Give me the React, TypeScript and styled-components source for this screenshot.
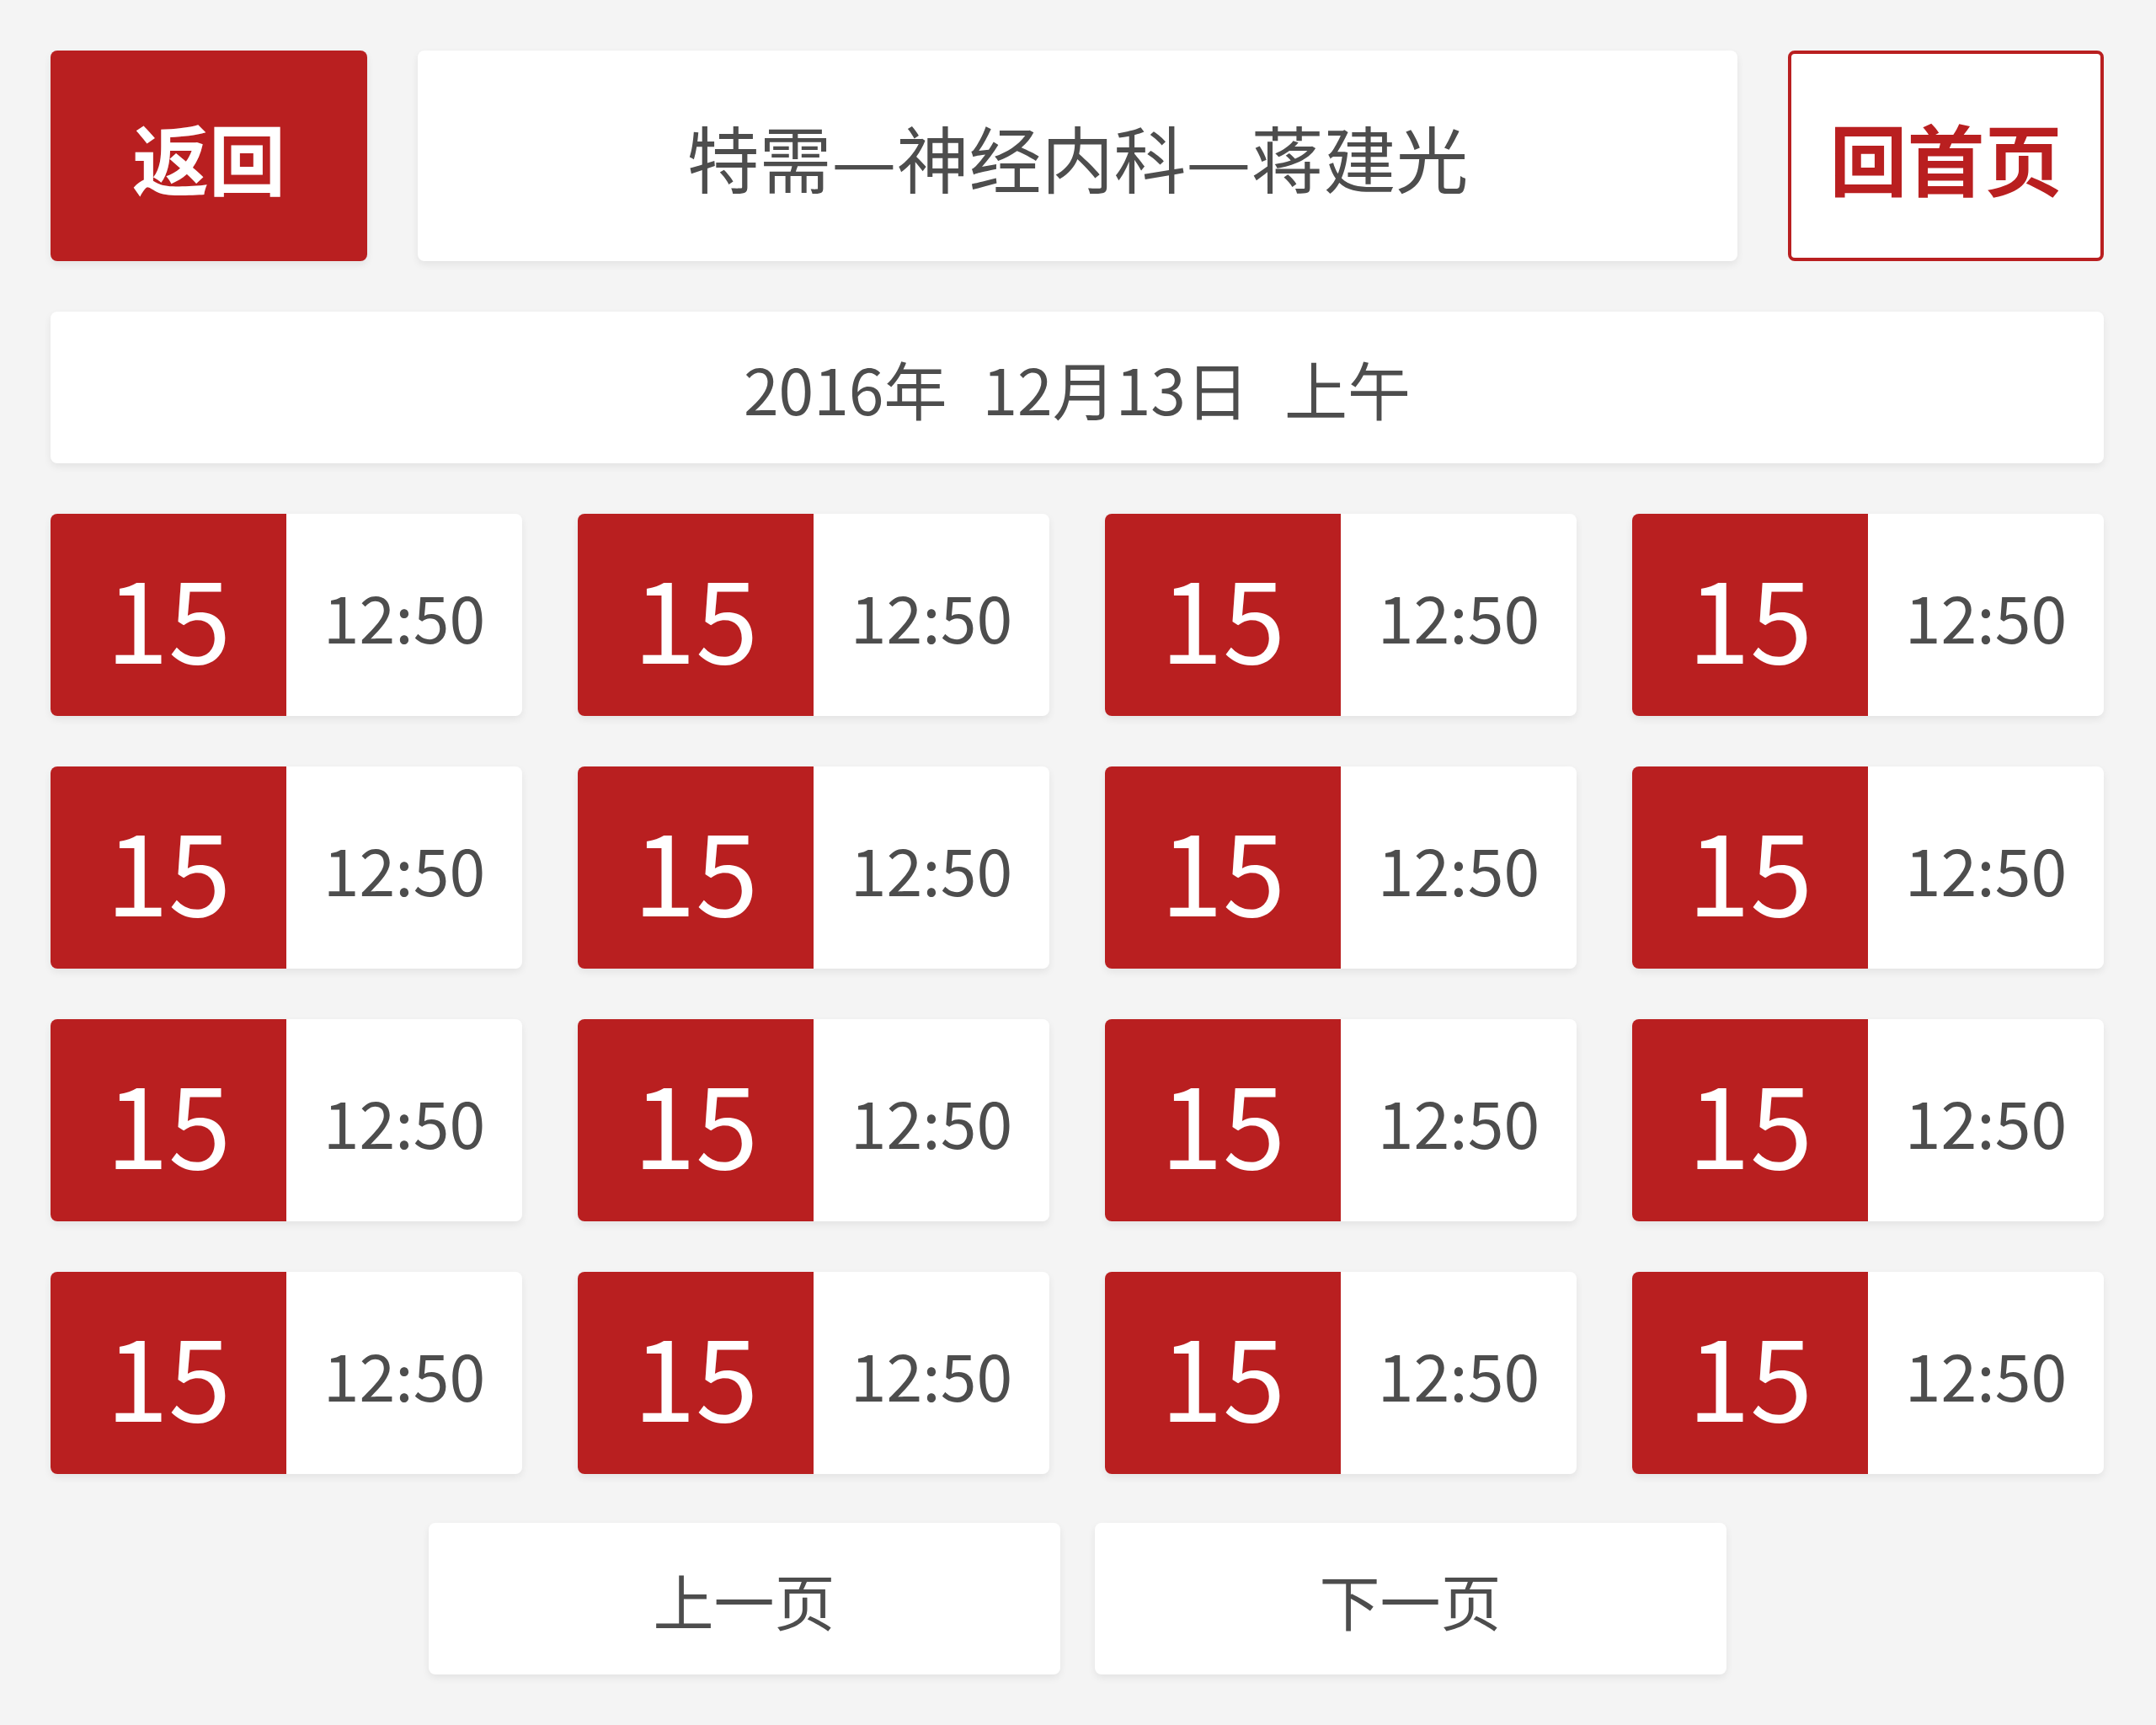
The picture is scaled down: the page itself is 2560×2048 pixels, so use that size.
import React, { FC } from 'react'
import styled, { createGlobalStyle } from 'styled-components'

const RED = '#b91f20'
const TEXT = '#4d4d4d'
const FONT = '"Noto Sans CJK SC", "Noto Sans", sans-serif'

const GlobalStyle = createGlobalStyle`
  html, body {
    margin: 0;
    padding: 0;
    background: #f4f4f4;
  }
  body {
    font-family: ${FONT};
    color: ${TEXT};
  }
`

const Page = styled.div`
  width: 2438px;
  padding: 60px 62px 60px 60px;
`

const Header = styled.div`
  display: grid;
  grid-template-columns: 376px 1fr 375px;
  gap: 60px;
  height: 250px;
`

const Panel = styled.div`
  display: flex;
  align-items: center;
  justify-content: center;
  background: #fff;
  border-radius: 8px;
  box-shadow: 0 4px 10px rgba(0, 0, 0, 0.07);
`

const BackButton = styled(Panel)`
  background: ${RED};
  color: #fff;
  font-size: 91px;
  font-weight: 700;
`

const Title = styled(Panel)`
  font-size: 86px;
  font-weight: 400;
`

const HomeButton = styled(Panel)`
  border: 4px solid ${RED};
  box-sizing: border-box;
  box-shadow: none;
  color: ${RED};
  font-size: 92px;
  font-weight: 700;
`

const DateBar = styled(Panel)`
  margin-top: 60px;
  height: 180px;
  font-size: 75px;
  gap: 42px;
`

const Grid = styled.div`
  margin-top: 60px;
  display: grid;
  grid-template-columns: repeat(4, 560px);
  column-gap: 66px;
  row-gap: 60px;
`

const Slot = styled.div`
  display: grid;
  grid-template-columns: 280px 1fr;
  height: 240px;
  border-radius: 8px;
  overflow: hidden;
  background: #fff;
  box-shadow: 0 4px 10px rgba(0, 0, 0, 0.07);
`

const Count = styled.div`
  display: flex;
  align-items: center;
  justify-content: center;
  background: ${RED};
  color: #fff;
  font-size: 134px;
  line-height: 1;
`

const Time = styled.div`
  display: flex;
  align-items: center;
  justify-content: center;
  font-size: 77px;
  line-height: 1;
`

const Pager = styled.div`
  margin-top: 58px;
  display: flex;
  justify-content: center;
  gap: 41px;
`

const PageButton = styled(Panel)`
  width: 750px;
  height: 180px;
  font-size: 72px;
`

const slots = Array.from({ length: 16 }, (_, i) => ({ id: i, count: 15, time: '12:50' }))

const App: FC = () => (
  <>
    <GlobalStyle />
    <Page>
      <Header>
        <BackButton>返回</BackButton>
        <Title>特需—神经内科—蒋建光</Title>
        <HomeButton>回首页</HomeButton>
      </Header>

      <DateBar>
        <span>2016年</span>
        <span>12月13日</span>
        <span>上午</span>
      </DateBar>

      <Grid>
        {slots.map((slot) => (
          <Slot key={slot.id}>
            <Count>{slot.count}</Count>
            <Time>{slot.time}</Time>
          </Slot>
        ))}
      </Grid>

      <Pager>
        <PageButton>上一页</PageButton>
        <PageButton>下一页</PageButton>
      </Pager>
    </Page>
  </>
)

export default App
